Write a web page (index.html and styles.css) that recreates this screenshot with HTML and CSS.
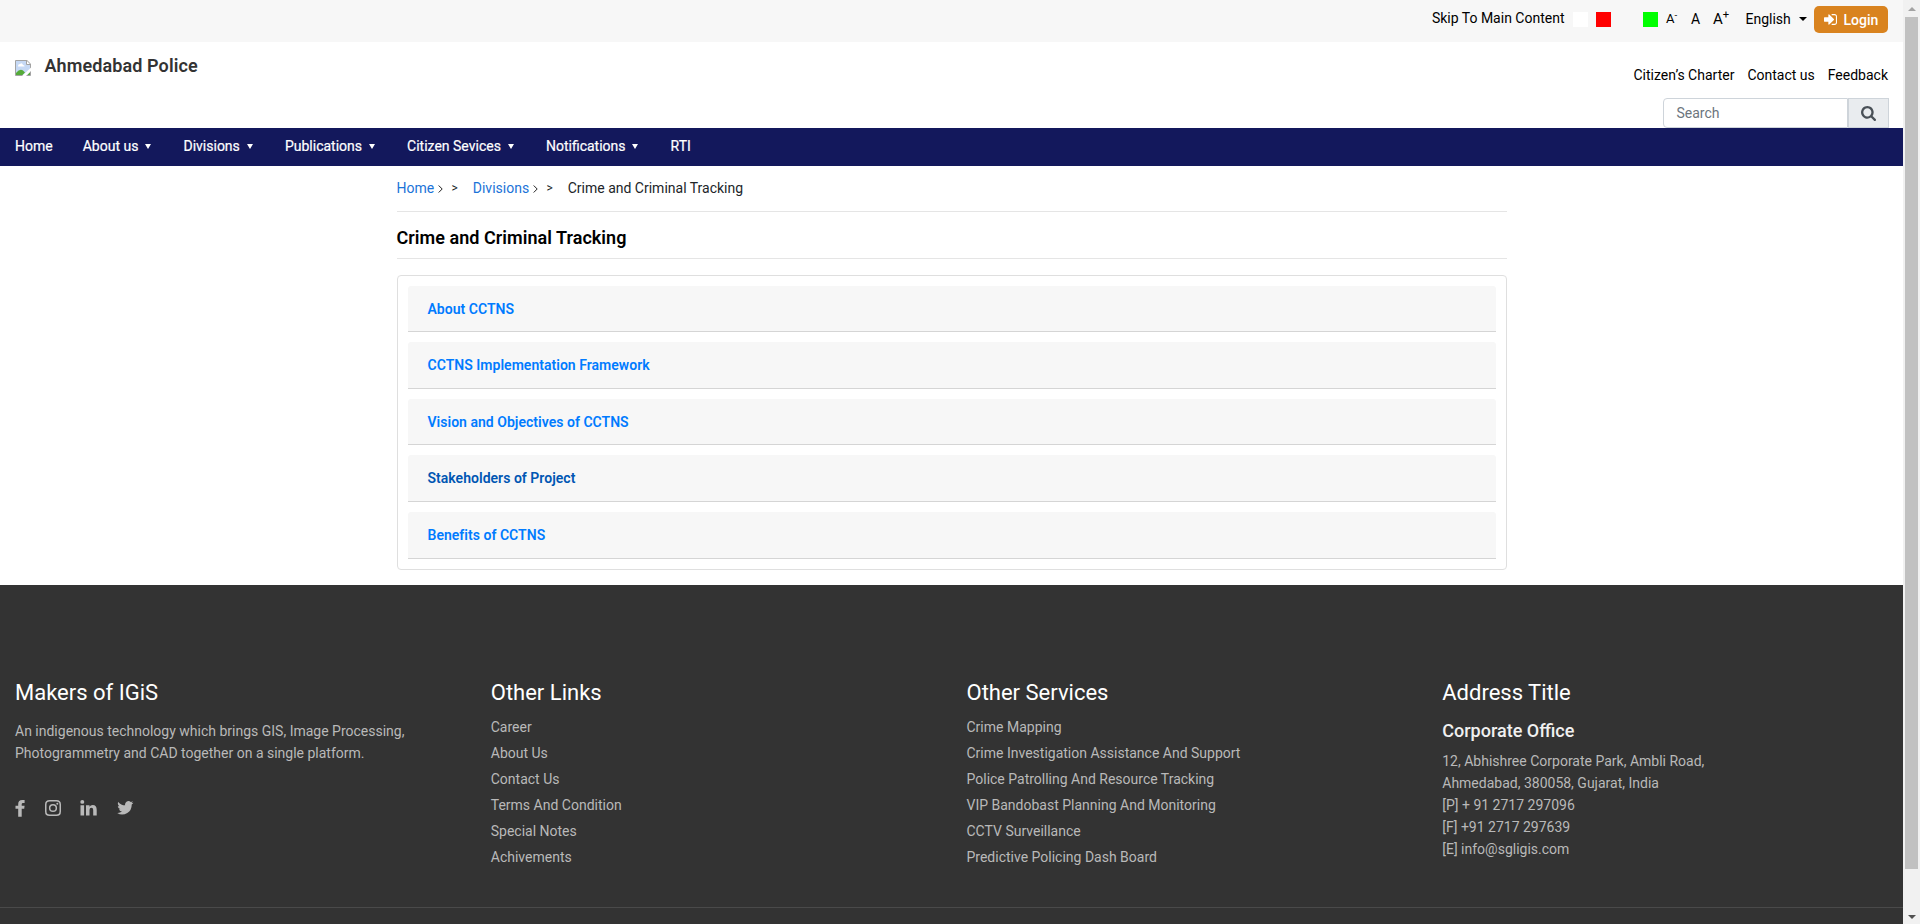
FILE: index.html
```html
<!DOCTYPE html>
<html lang="en">
<head>
<meta charset="utf-8">
<title>Ahmedabad Police</title>
<link rel="stylesheet" href="styles.css">
</head>
<body>
<div class="viewport">
<div class="page">
  <div class="topbar">
    <a class="skip">Skip To Main Content</a>
    <div class="swatches">
      <span class="swatch white"></span><span class="swatch red"></span><span class="swatch plain"></span><span class="swatch green"></span>
    </div>
    <div class="sizes"><a class="small">A<sup>-</sup></a><a class="mid">A</a><a class="large">A<sup>+</sup></a></div>
    <a class="language">English<span class="caret"></span></a>
    <a class="login"><svg class="login-icon" viewBox="0 64 1536 1280"><path d="M1184 704q0 26-19 45l-544 544q-19 19-45 19t-45-19-19-45v-288H64q-26 0-45-19t-19-45V512q0-26 19-45t45-19h448V160q0-26 19-45t45-19 45 19l544 544q19 19 19 45zM1536 352v704q0 119-84.500 203.500T1248 1344H928q-13 0-22.500-9.500T896 1312q0-4-1-20t-.5-26.500 3-23.500 10-19.500 20.500-6.500h320q66 0 113-47t47-113V352q0-66-47-113t-113-47H936l-11.500-1-11.500-3-8-5.500-7-9-2-13.500q0-4-1-20t-.5-26.500 3-23.500 10-19.500T928 64h320q119 0 203.500 84.500T1536 352z"/></svg>Login</a>
  </div>
  <header class="header">
    <div class="brand">
      <svg class="missing" width="16" height="16" viewBox="0 0 16 16"><path d="M.5.500h11l4 4v11H.5z" fill="#c6d9f5" stroke="#a3a3a3"/><path d="M1 15v-2q4-5 7-2.500l2 2L7.500 15z" fill="#55ab39"/><path d="M12 15l3-3v3z" fill="#55ab39"/><path d="M3 6q0-2 2-2 2-2 3 1 2 0 1.500 1.500H3z" fill="#fff"/><path d="M11.500 0v4.500H16z" fill="#fff" stroke="#a3a3a3"/><path d="M7 16l9-8.500V11l-5 5z" fill="#fff"/></svg>
      <span class="brand-name">Ahmedabad Police</span>
    </div>
    <div class="header-side">
      <div class="quick"><a>Citizen’s Charter</a><a>Contact us</a><a>Feedback</a></div>
      <div class="search"><span class="search-field">Search</span><span class="search-button"><svg width="15" height="15" viewBox="0 0 1664 1664"><path d="M1152 704q0-185-131.500-316.500T704 256 387.500 387.500 256 704t131.500 316.500T704 1152t316.500-131.500T1152 704zm512 832q0 52-38 90t-90 38q-54 0-90-38l-343-342q-179 124-399 124-143 0-273.500-55.500t-225-150-150-225T0 704t55.500-273.500 150-225 225-150T704 0t273.500 55.500 225 150 150 225T1408 704q0 220-124 399l343 343q37 37 37 90z"/></svg></span></div>
    </div>
  </header>
  <nav class="nav">
    <a>Home</a><a>About us<i></i></a><a>Divisions<i></i></a><a>Publications<i></i></a><a>Citizen Sevices<i></i></a><a>Notifications<i></i></a><a>RTI</a>
  </nav>
  <main class="content">
    <div class="crumbs"><a>Home</a><svg class="chev" width="5" height="8" viewBox="0 0 5 8"><path d="M.7.500L4.200 4 .7 7.500"/></svg><span class="sep">&gt;</span><a>Divisions</a><svg class="chev" width="5" height="8" viewBox="0 0 5 8"><path d="M.7.500L4.200 4 .7 7.500"/></svg><span class="sep">&gt;</span><span>Crime and Criminal Tracking</span></div>
    <h1 class="title">Crime and Criminal Tracking</h1>
    <div class="card">
      <a class="item">About CCTNS</a>
      <a class="item">CCTNS Implementation Framework</a>
      <a class="item">Vision and Objectives of CCTNS</a>
      <a class="item hovered">Stakeholders of Project</a>
      <a class="item">Benefits of CCTNS</a>
    </div>
  </main>
  <footer class="footer">
    <div class="columns">
      <section class="column">
        <h2>Makers of IGiS</h2>
        <p class="about">An indigenous technology which brings GIS, Image Processing,<br>Photogrammetry and CAD together on a single platform.</p>
        <div class="social">
          <svg width="10" height="17" viewBox="0 0 10 17"><path d="M9.600.100v2.900H8Q6.700 3 6.700 4.300v1.500h2.900l-.4 3H6.700V16.800H3.200V8.800H.5v-3h2.700V3.900Q3.200 0 7.200 0 8.800 0 9.600.100z"/></svg>
          <svg width="16" height="16" viewBox="0 0 16 16"><path fill-rule="evenodd" d="M4.600 0h6.800Q16 0 16 4.600v6.800Q16 16 11.400 16H4.600Q0 16 0 11.400V4.600Q0 0 4.600 0zM4.700 1.500Q1.500 1.500 1.500 4.700v6.600q0 3.200 3.200 3.200h6.600q3.200 0 3.200-3.200V4.700q0-3.200-3.200-3.200zM8 3.900a4.100 4.100 0 1 1 0 8.200 4.100 4.100 0 0 1 0-8.200zm0 1.500a2.600 2.600 0 1 0 0 5.200 2.600 2.600 0 0 0 0-5.200zM12.300 2.800a1 1 0 1 1 0 2 1 1 0 0 1 0-2z"/></svg>
          <svg width="17" height="16" viewBox="0 0 17 16"><path d="M.5 5.200h3.600v10.400H.5zM2.300 0q2 .1 2 1.900t-2 1.900Q.3 3.700.3 1.900T2.300 0zM6 5.200h3.500v1.500Q10.500 5 12.700 5q4 .1 4 4.700v5.900h-3.500V10q0-2.200-1.800-2.200Q9.500 7.800 9.500 10v5.600H6z"/></svg>
          <svg width="17" height="14" viewBox="0 0 17 14"><path d="M16.400 1.700q-.7 1-1.700 1.700Q15 9 10.300 12 5 15 .2 12q2.700.200 4.800-1.400-2.200-.2-3.100-2.300.8.100 1.500-.1Q.9 7.400.8 4.900q.7.400 1.500.4Q0 3.300 1.300.900 4 4.200 8.100 4.300 7.700 2 9.500.700q2.300-1.400 4.300.4 1.100-.2 2.100-.8-.4 1.200-1.400 1.800.9-.1 1.900-.4z"/></svg>
        </div>
      </section>
      <section class="column">
        <h2>Other Links</h2>
        <ul><li>Career</li><li>About Us</li><li>Contact Us</li><li>Terms And Condition</li><li>Special Notes</li><li>Achivements</li></ul>
      </section>
      <section class="column">
        <h2>Other Services</h2>
        <ul><li>Crime Mapping</li><li>Crime Investigation Assistance And Support</li><li>Police Patrolling And Resource Tracking</li><li>VIP Bandobast Planning And Monitoring</li><li>CCTV Surveillance</li><li>Predictive Policing Dash Board</li></ul>
      </section>
      <section class="column">
        <h2>Address Title</h2>
        <h3>Corporate Office</h3>
        <p class="address">12, Abhishree Corporate Park, Ambli Road,<br>Ahmedabad, 380058, Gujarat, India<br>[P] + 91 2717 297096<br>[F] +91 2717 297639<br>[E] info@sgligis.com</p>
      </section>
    </div>
  </footer>
</div>
<div class="scrollbar">
  <span class="arrow up"></span>
  <span class="thumb"></span>
  <span class="arrow down"></span>
</div>
</div>
</body>
</html>
```

FILE: styles.css
```css
* { box-sizing: border-box; }
body { margin: 0; font: 14px/22px Roboto, sans-serif; color: #212529; overflow: hidden; }
h1, h2, h3, p, ul { margin: 0; padding: 0; }
ul { list-style: none; }
svg { display: block; flex: none; }
a, span { white-space: nowrap; }
.viewport { display: flex; height: 924px; }
.page { width: 1903px; display: flex; flex-direction: column; }

.topbar { height: 42px; flex: none; background: #f7f7f7; color: #000; display: flex; justify-content: flex-end; align-items: flex-start; padding: 6px 15px 0 0; }
.skip { margin: 1px 8.500px 0 0; }
.swatches { display: flex; gap: 8px; margin-top: 6px; }
.swatch { width: 15px; height: 15px; }
.swatch.white { background: #fff; }
.swatch.red { background: #f00; }
.swatch.plain { width: 16px; }
.swatch.green { background: #0f0; }
.sizes { display: flex; margin: 2px 0 0 8px; }
.sizes a { width: 25px; }
.sizes sup { font-size: 75%; line-height: 0; position: relative; top: -0.5em; vertical-align: baseline; }
.sizes .small { font-size: 13px; }
.sizes .mid { font-size: 14px; width: 22px; }
.sizes .large { font-size: 15px; width: 32.500px; }
.language { display: flex; align-items: center; margin-top: 2px; width: 68.500px; }
.caret { border: 4px solid transparent; border-top-color: #000; border-bottom: 0; margin-left: 8px; }
.login { width: 74px; height: 27px; border-radius: 5px; background: #d9831f; color: #fff; font-weight: 500; display: flex; align-items: center; padding-left: 9.500px; }
.login-icon { width: 13px; height: 11px; margin-right: 7px; fill: #fff; }

.header { height: 86px; flex: none; background: #fff; display: flex; justify-content: space-between; padding: 0 15px; }
.brand { display: flex; align-items: flex-start; padding-top: 12px; }
.missing { margin-top: 6px; }
.brand-name { margin-left: 13.500px; font-size: 18px; font-weight: 600; line-height: 24px; letter-spacing: .1px; color: #333; }
.header-side { display: flex; flex-direction: column; align-items: flex-end; justify-content: space-between; padding-top: 22px; }
.quick { display: flex; gap: 13px; color: #000; }
.search { display: flex; height: 30px; margin-right: -1px; }
.search-field { width: 185px; border: 1px solid #ced4da; border-radius: 4px 0 0 4px; padding-left: 12.500px; line-height: 29px; color: #6c757d; }
.search-button { width: 41px; border: 1px solid #ced4da; background: #e9ecef; display: flex; align-items: center; justify-content: center; fill: #495057; }

.nav { height: 38px; flex: none; background: #13185c; color: #fff; display: flex; gap: 30px; padding: 0 15px; line-height: 36px; }
.nav a { display: flex; align-items: center; height: 36px; -webkit-text-stroke: .2px #fff; }
.nav i { border: 0 solid transparent; border-width: 5px 3px 0; border-top-color: #fff; margin: 1px 2.400px 0 6.700px; }

.content { width: 1110px; margin: 0 auto; height: 419px; flex: none; }
.crumbs { height: 46px; border-bottom: 1px solid #e5e5e5; display: flex; align-items: center; padding-bottom: 1px; }
.crumbs a { color: #1b73d8; }
.chev { fill: none; stroke: #222; margin: 1px 0 0 4px; }
.sep { font-size: 12px; margin: 0 15px 0 8.300px; }
.title { height: 47px; border-bottom: 1px solid #e5e5e5; font-size: 18px; line-height: 51px; font-weight: 600; letter-spacing: .04px; color: #000; }
.card { margin-top: 16px; height: 295px; border: 1px solid #dfdfdf; border-radius: 4px; padding: 9.800px 10px; display: flex; flex-direction: column; gap: 10px; }
.item { height: 46.550px; flex: none; background: #f7f7f7; border-bottom: 1px solid #d5d5d5; border-radius: 3px 3px 0 0; padding-left: 20px; line-height: 46px; font-weight: 600; letter-spacing: .025px; color: #007bff; }
.item.hovered { color: #0056b3; }

.footer { flex: none; height: 339px; background: #333; color: #b9b9b9; }
.columns { height: 323px; border-bottom: 1px solid #4a4a4a; display: grid; grid-template-columns: repeat(4, 1fr); padding-top: 93px; }
.column { padding: 0 15px; }
.column h2 { font-size: 22px; font-weight: 400; line-height: 30px; color: #fff; }
.about { margin-top: 12px; }
.social { display: flex; align-items: center; gap: 19.500px; margin-top: 35px; fill: #b9b9b9; height: 18px; }
.column ul { margin-top: 6px; }
.column li { height: 26px; line-height: 26px; }
.column h3 { font-size: 18px; font-weight: 500; line-height: 24px; margin-top: 11px; color: #f0f0f0; }
.address { margin-top: 7px; }

.scrollbar { width: 17px; background: #f1f1f1; display: flex; flex-direction: column; align-items: center; justify-content: space-between; padding: 7px 0 5px; }
.thumb { width: 13px; height: 852px; background: #c1c1c1; margin: 0 0 auto; }
.arrow { border: 4px solid transparent; }
.arrow.up { border-top: 0; border-bottom-color: #a3a3a3; margin-bottom: 6px; }
.arrow.down { border-bottom: 0; border-top-color: #505050; }
```
